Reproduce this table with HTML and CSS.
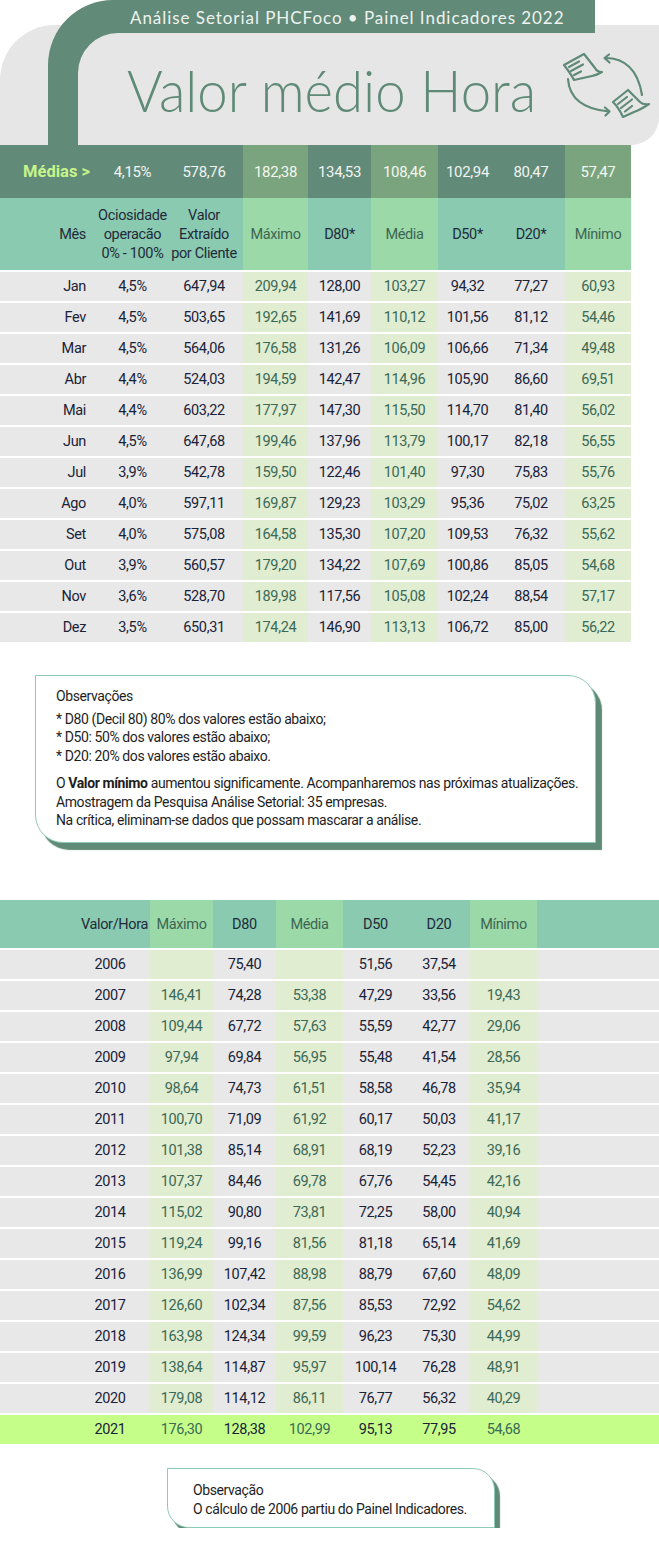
FILE: index.html
```html
<!DOCTYPE html>
<html lang="pt">
<head>
<meta charset="utf-8">
<title>Valor médio Hora</title>
<link rel="stylesheet" href="styles.css">
</head>
<body>
<div class="page">
  <header class="hero">
    <div class="hero-grey"></div>
    <div class="hero-band"><div class="hero-sub">Análise Setorial PHCFoco • Painel Indicadores 2022</div></div>
    <div class="hero-inner">
      <h1 class="hero-title">Valor médio Hora</h1>
      <svg class="hero-icon" viewBox="0 0 92 66" width="92" height="66" fill="none" stroke="#5f8a77" stroke-width="2.2" stroke-linecap="round" stroke-linejoin="round">
        <path d="M2 13 L22 2 L33 16 Q35 20 40 20 Q35 23 30 24 L12 28 Q9 22 2 13 Z"/>
        <path d="M7 15 L17 9.5 M9 19 L21 12.5 M12 23 L19 19.5"/>
        <path d="M43 6 Q74 6 80 43"/>
        <path d="M47 2.5 L42.5 6 L47.5 10.5"/>
        <path d="M6 27 Q8 56 47 59.5"/>
        <path d="M43 55.5 L47.5 59.5 L43.5 63.5"/>
        <path d="M51 50 L66 38 L78 50 Q81 53 87 52 Q78 58 72 60 L61 65 Q57 56 51 50 Z"/>
        <path d="M56 52 L65 45 M59 56 L70 47.5 M63 59.5 L70 54"/>
      </svg>
    </div>
  </header>

  <section class="t1">
    <div class="row medias">
      <div class="c first label">Médias &gt;</div>
      <div class="c">4,15%</div>
      <div class="c">578,76</div>
      <div class="c g">182,38</div>
      <div class="c">134,53</div>
      <div class="c g">108,46</div>
      <div class="c">102,94</div>
      <div class="c">80,47</div>
      <div class="c g">57,47</div>
    </div>
    <div class="row head">
      <div class="c first">Mês</div>
      <div class="c">Ociosidade<br>operacão<br>0% - 100%</div>
      <div class="c">Valor<br>Extraído<br>por Cliente</div>
      <div class="c g">Máximo</div>
      <div class="c">D80*</div>
      <div class="c g">Média</div>
      <div class="c">D50*</div>
      <div class="c">D20*</div>
      <div class="c g">Mínimo</div>
    </div>
    <div class="row data"><div class="c first">Jan</div><div class="c">4,5%</div><div class="c">647,94</div><div class="c g">209,94</div><div class="c">128,00</div><div class="c g">103,27</div><div class="c">94,32</div><div class="c">77,27</div><div class="c g">60,93</div></div>
    <div class="row data"><div class="c first">Fev</div><div class="c">4,5%</div><div class="c">503,65</div><div class="c g">192,65</div><div class="c">141,69</div><div class="c g">110,12</div><div class="c">101,56</div><div class="c">81,12</div><div class="c g">54,46</div></div>
    <div class="row data"><div class="c first">Mar</div><div class="c">4,5%</div><div class="c">564,06</div><div class="c g">176,58</div><div class="c">131,26</div><div class="c g">106,09</div><div class="c">106,66</div><div class="c">71,34</div><div class="c g">49,48</div></div>
    <div class="row data"><div class="c first">Abr</div><div class="c">4,4%</div><div class="c">524,03</div><div class="c g">194,59</div><div class="c">142,47</div><div class="c g">114,96</div><div class="c">105,90</div><div class="c">86,60</div><div class="c g">69,51</div></div>
    <div class="row data"><div class="c first">Mai</div><div class="c">4,4%</div><div class="c">603,22</div><div class="c g">177,97</div><div class="c">147,30</div><div class="c g">115,50</div><div class="c">114,70</div><div class="c">81,40</div><div class="c g">56,02</div></div>
    <div class="row data"><div class="c first">Jun</div><div class="c">4,5%</div><div class="c">647,68</div><div class="c g">199,46</div><div class="c">137,96</div><div class="c g">113,79</div><div class="c">100,17</div><div class="c">82,18</div><div class="c g">56,55</div></div>
    <div class="row data"><div class="c first">Jul</div><div class="c">3,9%</div><div class="c">542,78</div><div class="c g">159,50</div><div class="c">122,46</div><div class="c g">101,40</div><div class="c">97,30</div><div class="c">75,83</div><div class="c g">55,76</div></div>
    <div class="row data"><div class="c first">Ago</div><div class="c">4,0%</div><div class="c">597,11</div><div class="c g">169,87</div><div class="c">129,23</div><div class="c g">103,29</div><div class="c">95,36</div><div class="c">75,02</div><div class="c g">63,25</div></div>
    <div class="row data"><div class="c first">Set</div><div class="c">4,0%</div><div class="c">575,08</div><div class="c g">164,58</div><div class="c">135,30</div><div class="c g">107,20</div><div class="c">109,53</div><div class="c">76,32</div><div class="c g">55,62</div></div>
    <div class="row data"><div class="c first">Out</div><div class="c">3,9%</div><div class="c">560,57</div><div class="c g">179,20</div><div class="c">134,22</div><div class="c g">107,69</div><div class="c">100,86</div><div class="c">85,05</div><div class="c g">54,68</div></div>
    <div class="row data"><div class="c first">Nov</div><div class="c">3,6%</div><div class="c">528,70</div><div class="c g">189,98</div><div class="c">117,56</div><div class="c g">105,08</div><div class="c">102,24</div><div class="c">88,54</div><div class="c g">57,17</div></div>
    <div class="row data"><div class="c first">Dez</div><div class="c">3,5%</div><div class="c">650,31</div><div class="c g">174,24</div><div class="c">146,90</div><div class="c g">113,13</div><div class="c">106,72</div><div class="c">85,00</div><div class="c g">56,22</div></div>
  </section>

  <aside class="note note-1">
    <p class="note-title">Observações</p>
    <p>* D80 (Decil 80) 80% dos valores estão abaixo;<br>* D50: 50% dos valores estão abaixo;<br>* D20: 20% dos valores estão abaixo.</p>
    <p class="note-gap">O <b>Valor mínimo</b> aumentou significamente. Acompanharemos nas próximas atualizações.<br>Amostragem da Pesquisa Análise Setorial: 35 empresas.<br>Na crítica, eliminam-se dados que possam mascarar a análise.</p>
  </aside>

  <section class="t2">
    <div class="r2 head2"><div class="c yh">Valor/Hora</div><div class="c g">Máximo</div><div class="c">D80</div><div class="c g">Média</div><div class="c">D50</div><div class="c">D20</div><div class="c g">Mínimo</div><div class="c"></div></div>
    <div class="r2 data"><div class="c y">2006</div><div class="c g"></div><div class="c">75,40</div><div class="c g"></div><div class="c">51,56</div><div class="c">37,54</div><div class="c g"></div><div class="c"></div></div>
    <div class="r2 data"><div class="c y">2007</div><div class="c g">146,41</div><div class="c">74,28</div><div class="c g">53,38</div><div class="c">47,29</div><div class="c">33,56</div><div class="c g">19,43</div><div class="c"></div></div>
    <div class="r2 data"><div class="c y">2008</div><div class="c g">109,44</div><div class="c">67,72</div><div class="c g">57,63</div><div class="c">55,59</div><div class="c">42,77</div><div class="c g">29,06</div><div class="c"></div></div>
    <div class="r2 data"><div class="c y">2009</div><div class="c g">97,94</div><div class="c">69,84</div><div class="c g">56,95</div><div class="c">55,48</div><div class="c">41,54</div><div class="c g">28,56</div><div class="c"></div></div>
    <div class="r2 data"><div class="c y">2010</div><div class="c g">98,64</div><div class="c">74,73</div><div class="c g">61,51</div><div class="c">58,58</div><div class="c">46,78</div><div class="c g">35,94</div><div class="c"></div></div>
    <div class="r2 data"><div class="c y">2011</div><div class="c g">100,70</div><div class="c">71,09</div><div class="c g">61,92</div><div class="c">60,17</div><div class="c">50,03</div><div class="c g">41,17</div><div class="c"></div></div>
    <div class="r2 data"><div class="c y">2012</div><div class="c g">101,38</div><div class="c">85,14</div><div class="c g">68,91</div><div class="c">68,19</div><div class="c">52,23</div><div class="c g">39,16</div><div class="c"></div></div>
    <div class="r2 data"><div class="c y">2013</div><div class="c g">107,37</div><div class="c">84,46</div><div class="c g">69,78</div><div class="c">67,76</div><div class="c">54,45</div><div class="c g">42,16</div><div class="c"></div></div>
    <div class="r2 data"><div class="c y">2014</div><div class="c g">115,02</div><div class="c">90,80</div><div class="c g">73,81</div><div class="c">72,25</div><div class="c">58,00</div><div class="c g">40,94</div><div class="c"></div></div>
    <div class="r2 data"><div class="c y">2015</div><div class="c g">119,24</div><div class="c">99,16</div><div class="c g">81,56</div><div class="c">81,18</div><div class="c">65,14</div><div class="c g">41,69</div><div class="c"></div></div>
    <div class="r2 data"><div class="c y">2016</div><div class="c g">136,99</div><div class="c">107,42</div><div class="c g">88,98</div><div class="c">88,79</div><div class="c">67,60</div><div class="c g">48,09</div><div class="c"></div></div>
    <div class="r2 data"><div class="c y">2017</div><div class="c g">126,60</div><div class="c">102,34</div><div class="c g">87,56</div><div class="c">85,53</div><div class="c">72,92</div><div class="c g">54,62</div><div class="c"></div></div>
    <div class="r2 data"><div class="c y">2018</div><div class="c g">163,98</div><div class="c">124,34</div><div class="c g">99,59</div><div class="c">96,23</div><div class="c">75,30</div><div class="c g">44,99</div><div class="c"></div></div>
    <div class="r2 data"><div class="c y">2019</div><div class="c g">138,64</div><div class="c">114,87</div><div class="c g">95,97</div><div class="c">100,14</div><div class="c">76,28</div><div class="c g">48,91</div><div class="c"></div></div>
    <div class="r2 data"><div class="c y">2020</div><div class="c g">179,08</div><div class="c">114,12</div><div class="c g">86,11</div><div class="c">76,77</div><div class="c">56,32</div><div class="c g">40,29</div><div class="c"></div></div>
    <div class="r2 data last"><div class="c y">2021</div><div class="c g">176,30</div><div class="c">128,38</div><div class="c g">102,99</div><div class="c">95,13</div><div class="c">77,95</div><div class="c g">54,68</div><div class="c"></div></div>
  </section>

  <aside class="note note-2">
    <p>Observação<br>O cálculo de 2006 partiu do Painel Indicadores.</p>
  </aside>
</div>
</body>
</html>
```

FILE: styles.css
```css
* { box-sizing: border-box; }
html, body { margin: 0; padding: 0; background: #ffffff; }
body {
  font-family: Roboto, "Liberation Sans", sans-serif;
  font-size: 14.5px;
  letter-spacing: -0.35px;
  color: #1a2238;
}
.page { width: 659px; }

/* ---------- hero ---------- */
.hero { position: relative; height: 145px; }
.hero-grey {
  position: absolute; left: 0; top: 25px; right: 0; bottom: 0;
  background: #e6e6e6;
  border-radius: 55px 0 28px 0;
}
.hero-band {
  position: absolute; left: 48px; top: 0; width: 547px; bottom: 0;
  background: #628a78;
  border-top-left-radius: 65px;
}
.hero-sub {
  height: 33px;
  padding-left: 82px;
  line-height: 36px;
  font-family: Lato, "Liberation Sans", sans-serif;
  font-size: 17px;
  letter-spacing: 0.95px;
  color: #eef3ef;
  white-space: nowrap;
}
.hero-inner {
  position: absolute; left: 78px; top: 33px; right: 0; bottom: 0;
  background: #e6e6e6;
  border-top-left-radius: 40px;
  border-bottom-right-radius: 28px;
  display: flex;
  align-items: flex-start;
}
.hero-title {
  margin: 28px 0 0 49px;
  font-family: Lato, "Liberation Sans", sans-serif;
  font-weight: 300;
  font-size: 58px;
  letter-spacing: 0;
  line-height: 1;
  color: #5f8a77;
  white-space: nowrap;
  transform: scaleX(0.94);
  transform-origin: left center;
}
.hero-icon { margin: 19px 11px 0 auto; flex: none; }

/* ---------- table 1 ---------- */
.t1 { width: 631px; }
.row {
  display: grid;
  grid-template-columns: 100px 65px 78px 65px 63px 67px 59px 68px 66px;
}
.c {
  display: flex; align-items: center; justify-content: center;
  text-align: center;
  white-space: nowrap;
}
.row .first { justify-content: flex-end; padding-right: 14px; }
.medias { height: 53px; background: #628a78; color: #f1f4f2; font-size: 15px; }
.medias .g { background: #7aa47e; color: #f4f7ef; }
.medias .label { font-weight: bold; color: #c6f58b; font-size: 16.5px; letter-spacing: 0; padding-right: 10px; }
.head { height: 72px; background: #8acab0; line-height: 19px; color: #1f2a3a; }
.head .g { background: #9bd9a9; color: #3d6552; }
.data { height: 31px; border-top: 2px solid #ffffff; background: #e8e8e8; }
.data .g { background: #e0edd0; color: #3b6957; }

/* ---------- notes ---------- */
.note {
  background: #ffffff;
  border: 1px solid #8fcab5;
  box-shadow: 6px 7px 1px #5f8a77;
  color: #1e1e1e;
  font-size: 14px;
  letter-spacing: -0.4px;
  line-height: 18.5px;
}
.note p { margin: 0; white-space: nowrap; }
.note-1 {
  margin: 33px 0 0 35px;
  width: 561px;
  height: 168px;
  padding: 11px 0 0 20px;
  border-radius: 0 28px 0 28px;
}
.note-1 .note-title { margin-bottom: 4px; }
.note-1 .note-gap { margin-top: 9px; }
.note-2 {
  margin: 24px 0 0 167px;
  width: 328px;
  height: 60px;
  padding: 12px 0 0 25px;
  border-radius: 0 22px 0 22px;
  box-shadow: 5px 6px 1px #5f8a77;
}

/* ---------- table 2 ---------- */
.t2 { margin-top: 57px; width: 659px; }
.r2 {
  display: grid;
  grid-template-columns: 150px 63px 63px 67px 65px 62px 67px 122px;
}
.head2 { height: 48px; background: #8acab0; color: #1f2a3a; }
.head2 .g { background: #9bd9a9; color: #3d6552; }
.r2 .yh { justify-content: flex-end; padding-right: 2px; }
.r2 .y { padding-left: 70px; }
.r2.last { background: #c5ff8a; }
.r2.last .g { background: transparent; color: #3b6957; }
```
